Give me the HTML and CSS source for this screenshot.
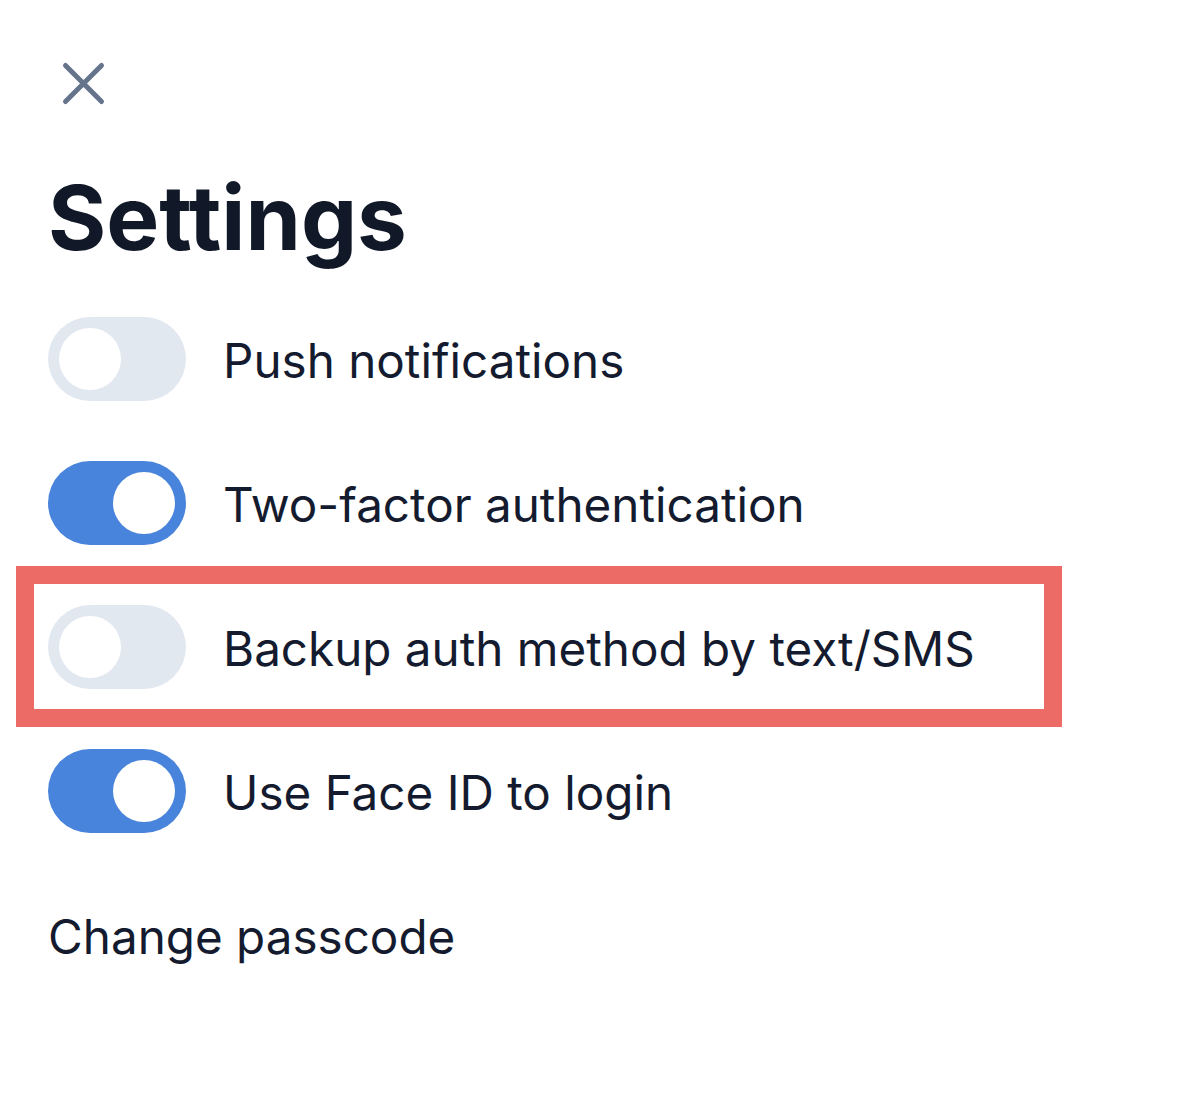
FILE: index.html
```html
<!DOCTYPE html>
<html lang="en">
<head>
<meta charset="utf-8">
<title>Settings</title>
<link rel="stylesheet" href="styles.css">
</head>
<body>
<main class="page">
  <button class="close" aria-label="Close">
    <svg width="48" height="48" viewBox="0 0 48 48" fill="none" stroke="#66748b" stroke-width="5" stroke-linecap="round">
      <path d="M5.5 5.5 L41.5 41.5 M41.5 5.5 L5.5 41.5"/>
    </svg>
  </button>
  <h1 class="title">Settings</h1>
  <ul class="list">
    <li class="row"><span class="toggle"><span class="knob"></span></span><span class="label">Push notifications</span></li>
    <li class="row"><span class="toggle on"><span class="knob"></span></span><span class="label">Two-factor authentication</span></li>
    <li class="row highlight"><span class="toggle"><span class="knob"></span></span><span class="label">Backup auth method by text/SMS</span></li>
    <li class="row"><span class="toggle on"><span class="knob"></span></span><span class="label">Use Face ID to login</span></li>
    <li class="row link"><span class="label">Change passcode</span></li>
  </ul>
</main>
</body>
</html>
```
FILE: styles.css
```css
*, *::before, *::after { box-sizing: border-box; }
html, body { margin: 0; padding: 0; background: #ffffff; }
body {
  font-family: Inter, "Noto Sans", sans-serif;
  color: #121a2e;
  width: 1179px;
  height: 1117px;
  overflow: hidden;
}
.page {
  padding: 60px 0 0 48px;
  display: flex;
  flex-direction: column;
}
.close {
  width: 48px;
  height: 48px;
  padding: 0;
  margin: 0 0 0 12px;
  border: none;
  background: none;
  display: block;
}
.close svg { display: block; }
.title {
  margin: 65px 0 0 0;
  font-size: 89px;
  line-height: 89px;
  font-weight: 700;
  letter-spacing: 0;
  color: #111827;
}
.list {
  list-style: none;
  margin: 55px 0 0 0;
  padding: 0;
  display: flex;
  flex-direction: column;
  gap: 60px;
}
.row {
  position: relative;
  display: flex;
  align-items: center;
  gap: 37px;
  height: 84px;
}
.label {
  font-size: 47.6px;
  line-height: 1;
  font-weight: 400;
  color: #141b2f;
  padding-top: 4px;
}
.toggle {
  width: 138px;
  height: 84px;
  border-radius: 42px;
  background: #e2e8f0;
  padding: 11px;
  display: flex;
  justify-content: flex-start;
  flex-shrink: 0;
}
.toggle .knob {
  width: 62px;
  height: 62px;
  border-radius: 50%;
  background: #ffffff;
}
.toggle.on {
  background: #4884db;
  justify-content: flex-end;
}
.highlight::before {
  content: "";
  position: absolute;
  left: -32px;
  top: -39px;
  width: 1046px;
  height: 161px;
  border: 18px solid #ec6b66;
  pointer-events: none;
}
```
